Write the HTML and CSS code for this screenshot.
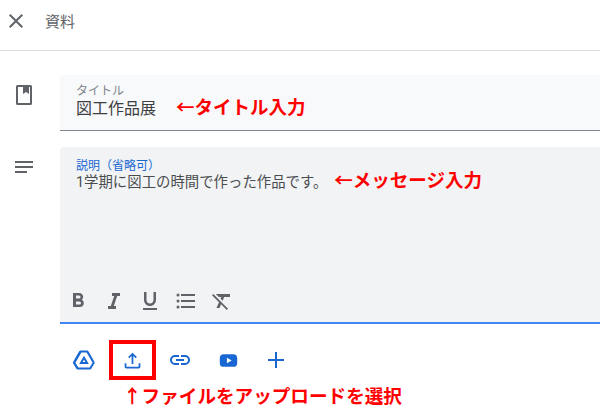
FILE: index.html
```html
<!DOCTYPE html>
<html lang="ja">
<head>
    <meta charset="UTF-8">
    <title>資料</title>
    <link rel="stylesheet" href="styles.css">
</head>
<body>
    <header class="top-bar">
        <svg class="close-icon" viewBox="0 0 24 24"><path d="M19 6.41 17.59 5 12 10.59 6.41 5 5 6.41 10.59 12 5 17.59 6.41 19 12 13.41 17.59 19 19 17.59 13.41 12z"/></svg>
        <span class="top-title">資料</span>
    </header>

    <main class="form">
        <div class="form-row title-row">
            <svg class="row-icon" viewBox="0 0 24 24"><path fill-rule="evenodd" d="M5.500 2h13A1.500 1.500 0 0 1 20 3.500v17a1.500 1.500 0 0 1-1.500 1.500h-13A1.500 1.500 0 0 1 4 20.500v-17A1.500 1.500 0 0 1 5.500 2zM6 4v16h12V4h-1v7l-3-2-3 2V4z"/></svg>
            <div class="field title-field">
                <div class="field-label">タイトル</div>
                <div class="field-value">図工作品展<span class="note title-note">←タイトル入力</span></div>
            </div>
        </div>

        <div class="form-row">
            <svg class="row-icon" viewBox="0 0 24 24"><path d="M3 6h18v2H3zM3 11h18v2H3zM3 16h12v2H3z"/></svg>
            <div class="field desc-field">
                <div class="field-label active">説明（省略可）</div>
                <div class="field-value small">1学期に図工の時間で作った作品です。<span class="note desc-note">←メッセージ入力</span></div>
                <div class="format-bar">
                    <svg viewBox="0 0 24 24"><path d="M15.600 10.800c1-.7 1.600-1.800 1.600-2.800 0-2.300-1.700-4-4-4H7v14h7c2.100 0 3.800-1.700 3.800-3.800 0-1.500-.9-2.800-2.200-3.400zM10 6.500h3a1.500 1.500 0 0 1 0 3h-3zm3.500 9H10v-3h3.500a1.500 1.500 0 0 1 0 3z"/></svg>
                    <svg viewBox="0 0 24 24"><path d="M10 4v3h2.200l-3.400 10H6v3h8v-3h-2.200l3.400-10H18V4z"/></svg>
                    <svg viewBox="0 0 24 24"><path d="M12 17c3.300 0 6-2.700 6-6V3h-2.500v8c0 1.900-1.600 3.500-3.500 3.500S8.500 12.900 8.500 11V3H6v8c0 3.300 2.700 6 6 6zM5 19v2h14v-2z"/></svg>
                    <svg viewBox="0 0 24 24"><path d="M4 10.500a1.500 1.500 0 1 0 0 3 1.500 1.500 0 0 0 0-3zm0-6a1.500 1.500 0 1 0 0 3 1.500 1.500 0 0 0 0-3zm0 12a1.500 1.500 0 1 0 0 3 1.500 1.500 0 0 0 0-3zM7 19h14v-2H7zm0-6h14v-2H7zm0-8v2h14V5z"/></svg>
                    <svg viewBox="0 0 24 24"><path d="M3.270 5 2 6.270l6.970 6.970L6.500 19h3l1.570-3.660L16.730 21 18 19.730 3.550 5.280zM6 5v.18L8.820 8h2.400l-.72 1.680 2.100 2.100L14.210 8H20V5z"/></svg>
                </div>
            </div>
        </div>

        <div class="attach-bar">
            <span class="attach-btn">
                <svg viewBox="0 0 24 24"><path fill-rule="evenodd" d="M9 2.500h6c.6 0 1.100.3 1.400.8l6 10.500c.3.500.3 1.100 0 1.600l-3 5.200c-.3.500-.8.900-1.400.9H5.600c-.6 0-1.100-.4-1.400-.9l-3-5.200c-.3-.5-.3-1.100 0-1.600l6-10.500C7.500 2.800 8.400 2.500 9 2.500zm.4 2L3.400 14.800 6.400 19.500h11.200l3-4.700-6-10.300zM12 7.800l4.800 8.200H7.200zm0 3.800L10.700 14h2.600z"/></svg>
            </span>
            <span class="attach-btn selected">
                <svg class="upload-icon" viewBox="0 0 24 24"><path d="M12 3 7 8l1.400 1.400L11 6.830V16h2V6.830l2.600 2.570L17 8zM3 15v4a2 2 0 0 0 2 2h14a2 2 0 0 0 2-2v-4h-2v4H5v-4z"/></svg>
            </span>
            <span class="attach-btn">
                <svg viewBox="0 0 24 24"><path d="M17 7h-4v2h4a3 3 0 0 1 0 6h-4v2h4a5 5 0 0 0 0-10zm-6 8H7a3 3 0 0 1 0-6h4V7H7a5 5 0 0 0 0 10h4zm-3-4h8v2H8z"/></svg>
            </span>
            <span class="attach-btn">
                <svg class="video-icon" viewBox="0 0 24 24"><path fill-rule="evenodd" d="M6 4h12a5 5 0 0 1 5 5v6a5 5 0 0 1-5 5H6a5 5 0 0 1-5-5V9a5 5 0 0 1 5-5zm4 4.500v7l6-3.500z"/></svg>
            </span>
            <span class="attach-btn">
                <svg viewBox="0 0 24 24"><path d="M11 4h2v7h7v2h-7v7h-2v-7H4v-2h7z"/></svg>
            </span>
        </div>
        <div class="note upload-note">↑ファイルをアップロードを選択</div>
    </main>
</body>
</html>
```

FILE: styles.css
```css
body {
    margin: 0;
    font-family: "Roboto", "Noto Sans CJK JP", sans-serif;
    background-color: white;
    color: #3c4043;
    height: 418px;
    overflow: hidden;
}

.top-bar {
    display: flex;
    align-items: center;
    height: 41px;
    padding-left: 4px;
    padding-bottom: 9px;
    border-bottom: 1px solid #dadce0;
}

.close-icon {
    width: 24px;
    height: 24px;
    fill: #5f6368;
}

.top-title {
    margin-left: 17px;
    font-size: 15px;
    color: #5f6368;
}

.form {
    padding-top: 24px;
}

.form-row {
    display: flex;
    margin-bottom: 16px;
}

.row-icon {
    width: 24px;
    height: 24px;
    margin: 8px 24px 0 12px;
    flex-shrink: 0;
    fill: #5f6368;
}

.field {
    flex: 1;
    box-sizing: border-box;
    padding: 9px 16px 0;
    border-radius: 4px 0 0 0;
}

.title-field {
    height: 56px;
    background-color: #f8f9fa;
    border-bottom: 1px solid #80868b;
}

.desc-field {
    display: flex;
    flex-direction: column;
    height: 177px;
    padding-top: 12px;
    background-color: #f1f3f4;
    border-bottom: 2px solid #4285f4;
}

.field-label {
    font-size: 12px;
    line-height: 14px;
    color: #80868b;
}

.field-label.active {
    color: #1967d2;
}

.field-value {
    font-size: 16px;
    line-height: 21px;
    color: #3c4043;
}

.field-value.small {
    font-size: 14.4px;
    line-height: 17px;
    color: #4a4d50;
}

.note {
    font-weight: 700;
    color: #ff0000;
}

.title-note {
    margin-left: 20px;
    font-size: 18.5px;
}

.desc-note {
    margin-left: 7px;
    font-size: 18.5px;
}

.format-bar {
    display: flex;
    gap: 12px;
    margin-top: auto;
    margin-left: -10px;
    padding-bottom: 9px;
}

.format-bar svg {
    width: 24px;
    height: 24px;
    fill: #5f6368;
}

.attach-bar {
    display: flex;
    align-items: center;
    height: 40px;
    margin-left: 60px;
    margin-top: 2px;
}

.attach-btn {
    display: flex;
    align-items: center;
    justify-content: center;
    box-sizing: border-box;
    width: 48px;
    height: 40px;
}

.attach-btn svg {
    width: 24px;
    height: 24px;
    fill: #1967d2;
}

.attach-btn svg.upload-icon {
    width: 21px;
    height: 21px;
}

.attach-btn svg.video-icon {
    width: 19px;
    height: 19px;
}

.attach-btn.selected {
    width: 47px;
    margin-left: 1px;
    border: 4px solid #ff0000;
}

.upload-note {
    margin: 5px 0 0 123px;
    font-size: 18.6px;
    line-height: 24px;
}
```
